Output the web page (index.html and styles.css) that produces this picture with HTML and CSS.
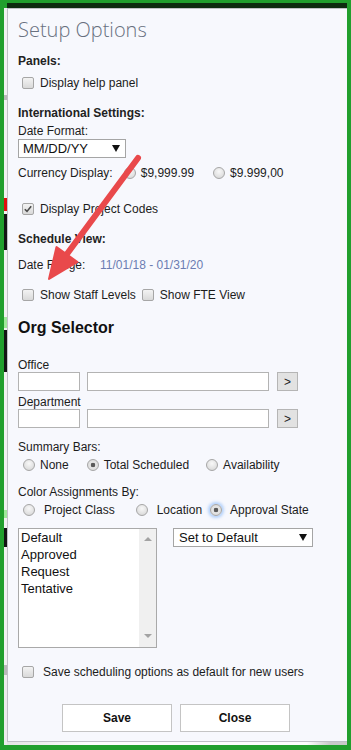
FILE: index.html
```html
<!DOCTYPE html>
<html lang="en">
<head>
    <meta charset="UTF-8">
    <meta name="viewport" content="width=device-width, initial-scale=1.0">
    <title>Setup Options</title>
    <link rel="stylesheet" href="styles.css">
</head>
<body>
    <div class="screen">
        <div class="strip">
            <div class="seg light" style="height: 87px"></div>
            <div class="seg grey" style="height: 5px"></div>
            <div class="seg light" style="height: 98px"></div>
            <div class="seg red" style="height: 13px"></div>
            <div class="seg light" style="height: 3px"></div>
            <div class="seg dark" style="height: 36px"></div>
            <div class="seg light" style="height: 67px"></div>
            <div class="seg mint" style="height: 11px"></div>
            <div class="seg light" style="height: 2px"></div>
            <div class="seg dark" style="height: 42px"></div>
            <div class="seg light" style="height: 138px"></div>
            <div class="seg mint" style="height: 8px"></div>
            <div class="seg light" style="height: 10px"></div>
            <div class="seg dark" style="height: 19px"></div>
            <div class="seg light" style="height: 118px"></div>
            <div class="seg grey" style="height: 10px"></div>
        </div>

        <div class="main">
            <div class="topbar"></div>

            <div class="panel">
                <h1 class="title">Setup Options</h1>

                <div class="heading mt-6">Panels:</div>
                <label class="check-row mt-4"><span class="cb"></span>Display help panel</label>

                <div class="heading mt-12">International Settings:</div>
                <div class="label mt-2">Date Format:</div>
                <div class="select date-select mt-1">
                    <span>MM/DD/YY</span>
                    <i class="caret"></i>
                </div>

                <div class="row mt-6">
                    <span>Currency Display:</span>
                    <label class="opt cur-1"><span class="rb"></span>$9,999.99</label>
                    <label class="opt cur-2"><span class="rb"></span>$9.999,00</label>
                </div>

                <label class="check-row mt-18">
                    <span class="cb checked">
                        <svg width="10" height="10" viewBox="0 0 10 10"><path d="M1.8 5.2 L4 7.4 L8.2 2.2" fill="none" stroke="#4a4a4a" stroke-width="1.6"/></svg>
                    </span>Display Project Codes
                </label>

                <div class="heading mt-12">Schedule View:</div>
                <div class="row mt-8">
                    <span class="range-label">Date Range:</span>
                    <span class="range">11/01/18 - 01/31/20</span>
                </div>

                <div class="check-row mt-12">
                    <label class="opt"><span class="cb"></span>Show Staff Levels</label>
                    <label class="opt fte"><span class="cb"></span>Show FTE View</label>
                </div>

                <h2 class="section-title mt-14">Org Selector</h2>

                <div class="label mt-20">Office</div>
                <div class="field-row">
                    <input class="field code" type="text">
                    <input class="field name" type="text">
                    <button class="go">&gt;</button>
                </div>

                <div class="label mt-4">Department</div>
                <div class="field-row">
                    <input class="field code" type="text">
                    <input class="field name" type="text">
                    <button class="go">&gt;</button>
                </div>

                <div class="label mt-12">Summary Bars:</div>
                <div class="row mt-2 radios summary">
                    <label class="opt"><span class="rb"></span>None</label>
                    <label class="opt"><span class="rb on"></span>Total Scheduled</label>
                    <label class="opt"><span class="rb"></span>Availability</label>
                </div>

                <div class="label mt-11">Color Assignments By:</div>
                <div class="row mt-2 radios color">
                    <label class="opt"><span class="rb"></span>Project Class</label>
                    <label class="opt"><span class="rb"></span>Location</label>
                    <label class="opt"><span class="rb on focus"></span>Approval State</label>
                </div>

                <div class="list-row mt-9">
                    <div class="listbox">
                        <ul>
                            <li>Default</li>
                            <li>Approved</li>
                            <li>Request</li>
                            <li>Tentative</li>
                        </ul>
                        <div class="scrollbar">
                            <i class="arrow-up"></i>
                            <i class="arrow-down"></i>
                        </div>
                    </div>
                    <div class="select color-select">
                        <span>Set to Default</span>
                        <i class="caret"></i>
                    </div>
                </div>

                <label class="check-row save-default mt-15"><span class="cb"></span>Save scheduling options as default for new users</label>

                <div class="buttons">
                    <button class="btn">Save</button>
                    <button class="btn">Close</button>
                </div>
            </div>

            <div class="below"></div>
        </div>
    </div>

    <svg class="pointer" width="351" height="750" viewBox="0 0 351 750">
        <line x1="138" y1="158" x2="64" y2="258" stroke="#e9494b" stroke-width="6" stroke-linecap="round"/>
        <polygon points="49,279 77.5,262 56.5,247" fill="#e9494b" stroke="#e9494b" stroke-width="2" stroke-linejoin="round"/>
    </svg>
</body>
</html>
```

FILE: styles.css
```css
* {
    margin: 0;
    padding: 0;
    box-sizing: border-box;
}

body {
    position: relative;
    height: 750px;
    overflow: hidden;
    background: #219f2d;
    font-family: 'Liberation Sans', Arial, sans-serif;
    font-size: 12px;
    color: #1c1c1c;
}

.screen {
    display: flex;
    height: 742px;
    margin: 3px 4px 0 4px;
}

.strip {
    width: 3px;
    margin-top: 5px;
    display: flex;
    flex-direction: column;
    background: #ececec;
}

.seg.light { background: #f1f1f1; }
.seg.grey { background: #b9b9b9; }
.seg.red { background: #e10d0d; }
.seg.dark { background: #141414; }
.seg.mint { background: #9fe89a; }

.main {
    flex: 1;
    display: flex;
    flex-direction: column;
}

.topbar {
    height: 5px;
    background: #0d2b0f;
}

.panel {
    flex: 1;
    background: #f7f8fd;
    border: 1px solid #bfc0c6;
    border-right: none;
    padding-left: 10px;
}

.below {
    height: 3px;
    background: linear-gradient(90deg, #e4e4e4 0, #fdfdfd 80px, #fdfdfd 300px, #c9c9c9 323px);
}

/* spacing */
.mt-1 { margin-top: 1px; }
.mt-2 { margin-top: 2px; }
.mt-4 { margin-top: 4px; }
.mt-6 { margin-top: 6px; }
.mt-8 { margin-top: 8px; }
.mt-9 { margin-top: 9px; }
.mt-11 { margin-top: 11px; }
.mt-12 { margin-top: 12px; }
.mt-14 { margin-top: 14px; }
.mt-15 { margin-top: 15px; }
.mt-18 { margin-top: 18px; }
.mt-20 { margin-top: 20px; }

.title {
    margin-top: 5px;
    height: 32px;
    line-height: 32px;
    font-family: 'Open Sans', sans-serif;
    font-weight: 300;
    font-size: 20px;
    color: #68707f;
}

.heading {
    height: 18px;
    line-height: 18px;
    font-weight: 700;
    color: #222;
}

.label {
    height: 14px;
    line-height: 14px;
}

.section-title {
    height: 20px;
    line-height: 20px;
    font-size: 16px;
    font-weight: 700;
    color: #111;
}

.row,
.check-row {
    display: flex;
    align-items: center;
    height: 18px;
}

.check-row {
    padding-left: 4px;
}

.check-row > .cb {
    margin-right: 6px;
}

.opt {
    display: flex;
    align-items: center;
}

.opt .cb {
    margin-right: 6px;
}

.opt.fte {
    margin-left: 6px;
}

/* checkbox + radio look */
.cb,
.rb {
    display: inline-flex;
    align-items: center;
    justify-content: center;
    width: 12px;
    height: 12px;
    flex-shrink: 0;
    border: 1px solid #a6a6a6;
    background: linear-gradient(#f3f3f3, #d9d9d9);
}

.cb {
    border-radius: 2px;
}

.rb {
    border-radius: 50%;
    background: radial-gradient(circle at 50% 35%, #f8f8f8 0, #e2e2e2 60%, #d2d2d2 100%);
}

.rb.on {
    background: radial-gradient(circle, #5a5a5a 0, #5a5a5a 2px, #e6e6e6 2.6px, #d6d6d6 100%);
}

.rb.focus {
    box-shadow: 0 0 3px 2px rgba(120, 175, 250, 0.55);
}

/* currency row */
.cur-1 { margin-left: 11px; }
.cur-2 { margin-left: 19px; }
.cur-1 .rb,
.cur-2 .rb { margin-right: 5px; }

.range-label {
    width: 82px;
}

.range {
    color: #6b7cb2;
}

/* radio rows */
.radios {
    padding-left: 5px;
}

.summary .rb { margin-right: 5px; }
.summary .opt + .opt { margin-left: 18px; }
.summary .opt:last-child { margin-left: 17px; }

.color .rb { margin-right: 9px; }
.color .opt + .opt { margin-left: 21px; }
.color .opt:last-child { margin-left: 8px; }
.color .opt:last-child .rb { margin-right: 8px; }

/* selects */
.select {
    display: flex;
    align-items: center;
    justify-content: space-between;
    height: 19px;
    padding: 0 5px 0 4px;
    background: #fff;
    border: 1px solid #a5a5a5;
    font-size: 13px;
    color: #111;
}

.date-select {
    width: 108px;
}

.caret {
    width: 0;
    height: 0;
    border-left: 4px solid transparent;
    border-right: 4px solid transparent;
    border-top: 7px solid #111;
}

/* org selector */
.field-row {
    display: flex;
    height: 19px;
}

.field {
    height: 19px;
    border: 1px solid #b3b3b3;
    background: #fff;
}

.field.code {
    width: 62px;
}

.field.name {
    width: 182px;
    margin-left: 7px;
}

.go {
    width: 21px;
    height: 19px;
    margin-left: 8px;
    border: 1px solid #b5b5b5;
    background: #e2e2e2;
    font-family: 'Liberation Sans', Arial, sans-serif;
    font-size: 12px;
    color: #222;
}

/* list + select */
.list-row {
    display: flex;
    align-items: flex-start;
    height: 120px;
}

.listbox {
    display: flex;
    width: 139px;
    height: 120px;
    border: 1px solid #a9a9a9;
    background: #fff;
}

.listbox ul {
    flex: 1;
    list-style: none;
    padding: 0 0 0 2px;
    font-size: 13px;
    line-height: 17px;
    color: #111;
}

.scrollbar {
    width: 17px;
    display: flex;
    flex-direction: column;
    justify-content: space-between;
    align-items: center;
    padding: 8px 0 9px;
    background: #f0f0f0;
}

.arrow-up,
.arrow-down {
    width: 0;
    height: 0;
    border-left: 4px solid transparent;
    border-right: 4px solid transparent;
}

.arrow-up { border-bottom: 4px solid #a3a3a3; }
.arrow-down { border-top: 4px solid #a3a3a3; }

.color-select {
    width: 140px;
    margin-left: 16px;
    padding-left: 5px;
}

.save-default > .cb {
    margin-right: 9px;
}

/* buttons */
.buttons {
    display: flex;
    gap: 8px;
    margin-top: 23px;
    padding-left: 44px;
}

.btn {
    width: 110px;
    height: 28px;
    border: 1px solid #c4c4c4;
    background: #fff;
    font-family: 'Liberation Sans', Arial, sans-serif;
    font-size: 12px;
    font-weight: 700;
    color: #111;
}

/* annotation arrow drawn over the dialog */
.pointer {
    position: absolute;
    top: 0;
    left: 0;
    pointer-events: none;
}
```
